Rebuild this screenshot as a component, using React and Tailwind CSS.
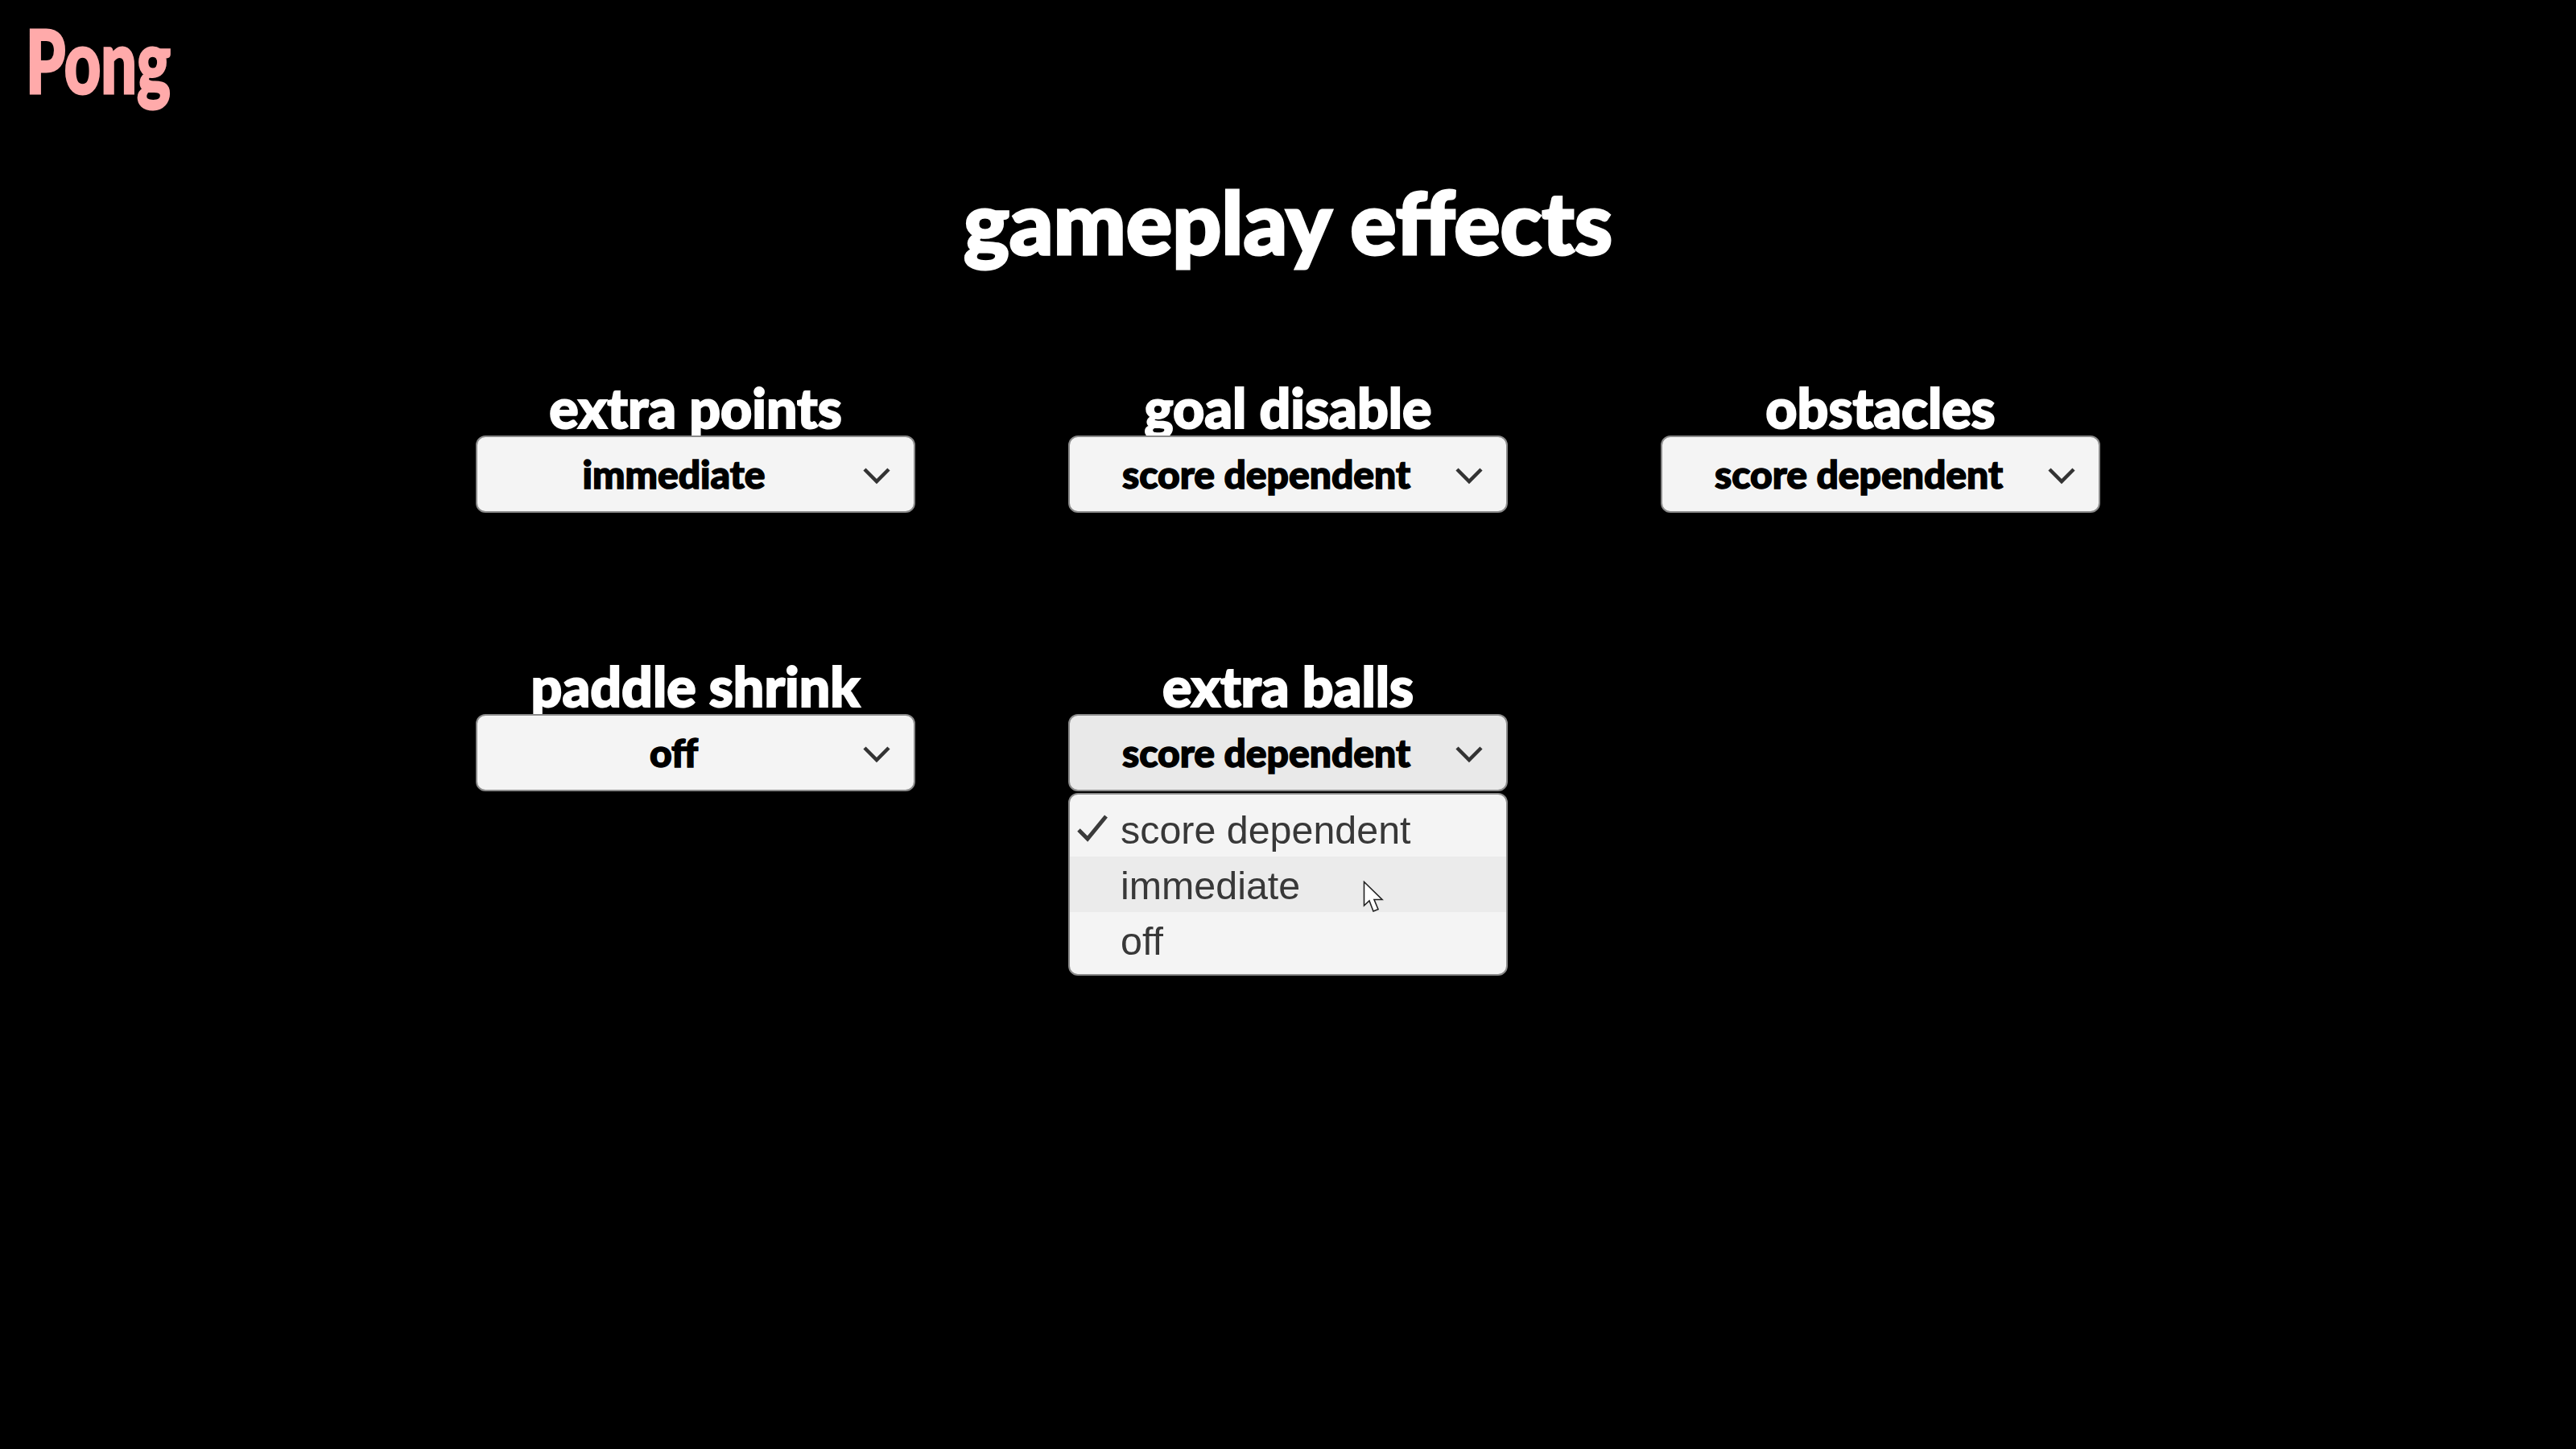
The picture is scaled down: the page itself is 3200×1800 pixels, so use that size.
import React from "react";

const display = "font-['Lato','DejaVu_Sans',sans-serif] font-black";

function Chevron() {
  return (
    <svg width="34" height="22" viewBox="0 0 34 22" fill="none" className="mt-[3px] text-[#333]">
      <path d="M2 3 L17 18 L32 3" stroke="currentColor" strokeWidth="4.5" />
    </svg>
  );
}

function Effect({ label, value, open, children }) {
  return (
    <div className="relative flex w-[546px] flex-col items-center">
      <div className={`${display} h-[64px] text-[68px] leading-[57px] text-white whitespace-nowrap [-webkit-text-stroke:2px_#fff]`}>{label}</div>
      <div
        className={`flex h-[96px] w-full items-center rounded-[12px] border-2 border-[#8a8a8a] pl-[63px] pr-[29px] ${
          open ? "bg-[#e9e9e9]" : "bg-[#f4f4f4]"
        }`}
      >
        <span className={`${display} w-[362px] text-center text-[48px] leading-none text-black whitespace-nowrap [-webkit-text-stroke:1.5px_#000]`}>{value}</span>
        <span className="ml-auto flex items-center">
          <Chevron />
        </span>
      </div>
      {children}
    </div>
  );
}

function Menu() {
  const items = ["score dependent", "immediate", "off"];
  return (
    <div className="absolute left-0 top-[162px] z-10 w-full overflow-hidden rounded-[12px] border-2 border-[#8a8a8a] bg-[#f4f4f4] py-[8px]">
      {items.map((item, i) => (
        <div
          key={item}
          className={`relative flex h-[69px] items-center pl-[63px] font-['Liberation_Sans',sans-serif] text-[48.4px] leading-none text-[#383838] ${
            i === 1 ? "bg-[#ebebeb]" : ""
          }`}
        >
          {i === 0 && (
            <svg width="40" height="36" viewBox="0 0 40 36" fill="none" className="absolute left-[8px] top-[16px]">
              <path d="M3 20 L14 31 L37 3" stroke="#3a3a3a" strokeWidth="5" />
            </svg>
          )}
          <span className="mt-[4px]">{item}</span>
          {i === 1 && (
            <svg width="28" height="42" viewBox="0 0 28 42" className="absolute left-[364px] top-[30px]">
              <path d="M1.5 1.5 V31 L8 25 L13 38 L19 35.5 L14 23.5 H24 Z" fill="#fff" stroke="#222" strokeWidth="1.6" />
            </svg>
          )}
        </div>
      ))}
    </div>
  );
}

export default function App() {
  return (
    <div className="min-h-[1800px] bg-black">
      <header className="h-[138px] px-[32px] pt-[16px]">
        <div className="inline-block origin-left scale-x-[0.73] font-['Lato','DejaVu_Sans',sans-serif] text-[108px] leading-[116px] font-black text-[#ffaaaa] [-webkit-text-stroke:3px_#ffaaaa]">
          Pong
        </div>
      </header>

      <h1 className={`${display} mt-[72px] text-center text-[107px] leading-[130px] text-white [-webkit-text-stroke:3px_#fff]`}>gameplay effects</h1>

      <main className="mx-auto mt-[137px] grid w-[2018px] grid-cols-[546px_546px_546px] justify-between gap-y-[186px]">
        <Effect label="extra points" value="immediate" />
        <Effect label="goal disable" value="score dependent" />
        <Effect label="obstacles" value="score dependent" />
        <Effect label="paddle shrink" value="off" />
        <Effect label="extra balls" value="score dependent" open>
          <Menu />
        </Effect>
      </main>
    </div>
  );
}
